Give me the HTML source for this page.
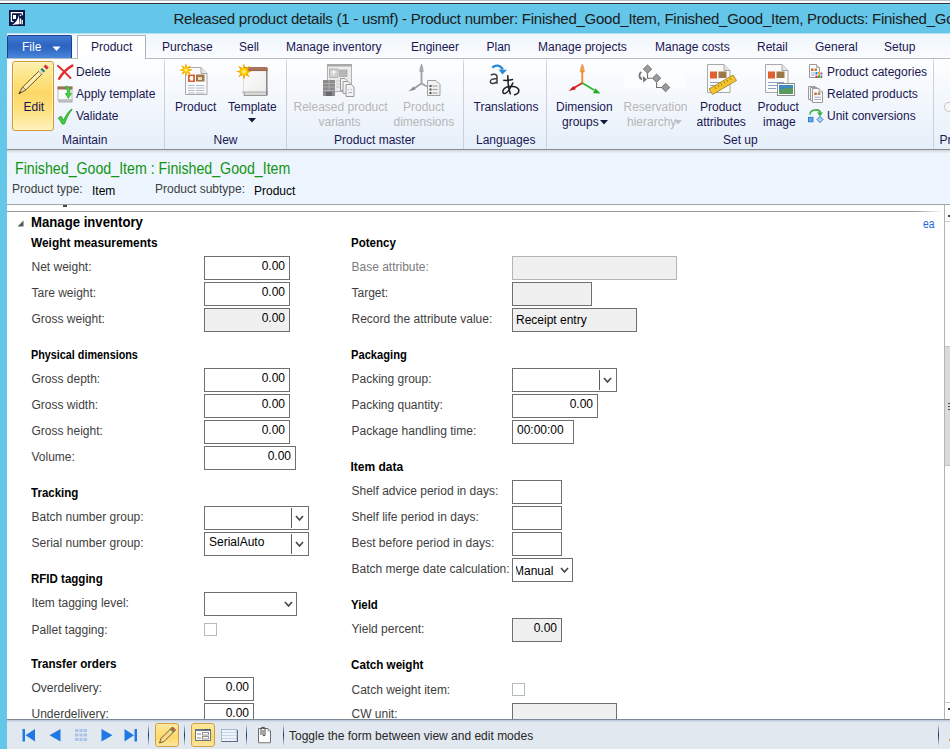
<!DOCTYPE html>
<html><head><meta charset="utf-8">
<style>
*{margin:0;padding:0;box-sizing:border-box}
html,body{width:950px;height:749px;overflow:hidden;background:#fff;font-family:"Liberation Sans",sans-serif;font-size:12px;line-height:1}
.a{position:absolute}
.t{position:absolute;white-space:nowrap;line-height:12px;font-size:12px}
.rb{color:#1a1652}
.dis{color:#b6b6b6}
.lab{color:#3e3e3e}
.labd{color:#7c7c7c}
.hd{font-weight:bold;color:#000}
.box{position:absolute;border:1px solid #6f6f6f;background:#fff;height:24px;overflow:hidden}
.boxd{background:#f0f0f0}
.boxl{border-color:#b2b6b9}
.num{position:absolute;right:4px;color:#000;line-height:12px;white-space:nowrap}
.val{position:absolute;left:4px;color:#000;line-height:12px;white-space:nowrap}
.clipv{overflow:hidden;width:45px;height:14px}
.chk{position:absolute;width:13px;height:13px;border:1px solid #b4babd;background:#fff}

</style></head><body>

<div class="a" style="left:0;top:0;width:950px;height:1px;background:#b9bfc7"></div>
<div class="a" style="left:0;top:1px;width:950px;height:2px;background:#fbfcfd"></div>
<div class="a" style="left:0;top:3px;width:950px;height:1px;background:#2b3038"></div>
<div class="a" style="left:0;top:4px;width:950px;height:1px;background:#66d2f4"></div>
<div class="a" style="left:0;top:5px;width:950px;height:744px;background:#64c6e8"></div>
<svg class="a" style="left:9px;top:10px" width="16" height="16" viewBox="0 0 16 16"><rect x="0" y="0" width="16" height="16" fill="#061446"/><path d="M2.4 11.8 V2.6 H13.4 V5.2" fill="none" stroke="#fff" stroke-width="1.3"/><path d="M2 11.6 H4.6" stroke="#fff" stroke-width="1"/><rect x="4" y="5" width="3" height="4" fill="#fff"/><path d="M3 15 C6.5 13 9 9.5 9.8 5 L10.5 14.3 C8 14.3 5.5 14.6 3 15 Z" fill="#fff"/><rect x="10.8" y="4.8" width="1.3" height="1.3" fill="#fff"/><rect x="10.8" y="8.3" width="1.3" height="5.8" fill="#fff"/><rect x="12.6" y="9.8" width="1.3" height="4.6" fill="#fff"/></svg>
<div class="t" style="left:173.5px;top:11px;font-size:15px;letter-spacing:-0.25px;line-height:16px;color:#1b1b1b">Released product details (1 - usmf) - Product number: Finished_Good_Item, Finished_Good_Item, Products: Finished_Good_Item</div>
<div class="a" style="left:7px;top:33px;width:943px;height:25px;background:linear-gradient(#f0f6fc,#fafcfe)"></div>
<div class="a" style="left:7px;top:33px;width:943px;height:1px;background:#b8e0f0"></div>
<div class="a" style="left:7px;top:58px;width:943px;height:1px;background:#b3bac2"></div>
<div class="a" style="left:7px;top:35px;width:65px;height:23px;border:1px solid #1c3f8e;border-bottom:none;border-radius:2px 2px 0 0;background:linear-gradient(#3f7cd4,#2c63bf 45%,#3671cb 70%,#4a88dc)"></div>
<div class="t" style="left:22px;top:41px;color:#fff">File</div>
<svg class="a" style="left:52px;top:45.5px" width="9" height="6"><path d="M0.5 0.5 L8.5 0.5 L4.5 5 Z" fill="#fff"/></svg>
<div class="a" style="left:77px;top:35px;width:69px;height:24px;border:1px solid #aab3bd;border-bottom:none;background:linear-gradient(#fff,#fdfeff)"></div>
<div class="t rb" style="left:91px;top:41px">Product</div>
<div class="t rb" style="left:162px;top:41px">Purchase</div>
<div class="t rb" style="left:239px;top:41px">Sell</div>
<div class="t rb" style="left:286px;top:41px">Manage inventory</div>
<div class="t rb" style="left:411px;top:41px">Engineer</div>
<div class="t rb" style="left:486.5px;top:41px">Plan</div>
<div class="t rb" style="left:538px;top:41px">Manage projects</div>
<div class="t rb" style="left:655px;top:41px">Manage costs</div>
<div class="t rb" style="left:757px;top:41px">Retail</div>
<div class="t rb" style="left:815px;top:41px">General</div>
<div class="t rb" style="left:884px;top:41px">Setup</div>
<div class="a" style="left:7px;top:59px;width:943px;height:90px;background:linear-gradient(#fdfeff 0%,#f1f6fc 55%,#e5effa 100%)"></div>
<div class="a" style="left:7px;top:149px;width:943px;height:1px;background:#868d95"></div>
<div class="a" style="left:164px;top:59px;width:1px;height:90px;background:linear-gradient(#dfe5ec,#c9d2dc 8%,#c9d2dc 100%)"></div>
<div class="a" style="left:286px;top:59px;width:1px;height:90px;background:linear-gradient(#dfe5ec,#c9d2dc 8%,#c9d2dc 100%)"></div>
<div class="a" style="left:463px;top:59px;width:1px;height:90px;background:linear-gradient(#dfe5ec,#c9d2dc 8%,#c9d2dc 100%)"></div>
<div class="a" style="left:546px;top:59px;width:1px;height:90px;background:linear-gradient(#dfe5ec,#c9d2dc 8%,#c9d2dc 100%)"></div>
<div class="a" style="left:933px;top:59px;width:1px;height:90px;background:linear-gradient(#dfe5ec,#c9d2dc 8%,#c9d2dc 100%)"></div>
<div class="a" style="left:12px;top:61px;width:42px;height:70px;border:1px solid #d4962e;border-radius:3px;box-shadow:inset 0 0 0 1px rgba(255,250,220,0.6);background:linear-gradient(#fcefb0 0%,#fde486 22%,#fdd868 45%,#fde07e 70%,#fff2bc 100%)"></div>
<svg class="a" style="left:12px;top:60px" width="42" height="40" viewBox="0 0 42 40">
<g transform="translate(6.9,33.7) rotate(-44.4)">
<path d="M0 0 L7.5 -2.1 L30 -2.1 L30 2.1 L7.5 2.1 Z" fill="#fbeeb0" stroke="#6a4a1a" stroke-width="0.9"/>
<path d="M0.3 0 L7.5 -2.1 L7.5 2.1 Z" fill="#f4dcb4" stroke="#6a4a1a" stroke-width="0.7"/>
<path d="M0 0 L2.2 -0.7 L2.2 0.7 Z" fill="#222"/>
<rect x="30" y="-2.2" width="2.8" height="4.4" fill="#d8d8e0"/>
<rect x="32.5" y="-2.2" width="2.3" height="4.4" fill="#2a8a3a"/>
<rect x="34.8" y="-2.2" width="1.8" height="4.4" fill="#f0f0f0"/>
<rect x="36.6" y="-2.2" width="3" height="4.4" fill="#d03040"/>
</g>
</svg>
<div class="t rb" style="left:23.5px;top:101px">Edit</div>
<svg class="a" style="left:56px;top:64px" width="18" height="17" viewBox="0 0 18 17">
<path d="M1.8 1.8 C5 4.5 10 9.5 14.5 14" stroke="#e2302a" stroke-width="1.9" stroke-linecap="round" fill="none"/>
<path d="M16.3 1.6 C11 4.5 6.5 9 3.2 14.6" stroke="#e2302a" stroke-width="2.5" stroke-linecap="round" fill="none"/>
</svg>
<div class="t rb" style="left:76px;top:66px">Delete</div>
<svg class="a" style="left:56px;top:85px" width="18" height="18" viewBox="0 0 18 18">
<rect x="3" y="14" width="13" height="3" fill="#d0d0d0" stroke="#9a9a9a" stroke-width="0.8"/>
<rect x="2" y="2" width="14" height="13" fill="#fbfbfb" stroke="#b0b0b0" stroke-width="0.8"/>
<rect x="1.5" y="1.5" width="15" height="3" fill="#a06e52"/>
<path d="M2 14.5 L16 14.5" stroke="#c8c8c8"/>
<path d="M10 1 C13.5 1.5 14.5 4.5 13.8 8.5 L15.5 8.5 L12.3 13.5 L9.3 8.5 L11.2 8.5 C11.6 6 11.2 4 10 3.5 Z" fill="#48d048" stroke="#20a020" stroke-width="0.6"/>
</svg>
<div class="t rb" style="left:76px;top:88px">Apply template</div>
<svg class="a" style="left:57px;top:108px" width="16" height="17" viewBox="0 0 16 17">
<path d="M1.3 9.8 L4.2 8.3 L6.6 12.2 C8.6 7.8 11 3.8 14.6 1 L15 1.8 C11.8 5.5 9.6 10.2 7.6 15.8 L5.4 16.2 Z" fill="#40d040" stroke="#1c901c" stroke-width="0.7"/>
</svg>
<div class="t rb" style="left:76px;top:110px">Validate</div>
<div class="t rb" style="left:62px;top:134px">Maintain</div>
<svg class="a" style="left:178px;top:62px" width="32" height="34" viewBox="0 0 32 34">
<path d="M7.5 5.5 L23 5.5 L29 11.5 L29 32.5 L7.5 32.5 Z" fill="#fafafa" stroke="#a8a8a8"/>
<path d="M23 5.5 L23 11.5 L29 11.5" fill="#e8e8e8" stroke="#a8a8a8"/>
<rect x="10" y="12.5" width="7" height="7.5" fill="#e06030"/>
<path d="M12 14 L15 14 L15 15.5 L16 16 L15 17 L15 18.5 L12 18.5 L12 17 L11 16 L12 15.5 Z" fill="#fff"/>
<rect x="18" y="12.5" width="8.5" height="7" fill="#9c7848"/>
<rect x="20" y="15" width="4" height="3" fill="#e8dcc0"/>
<g stroke="#a4b4cc" stroke-width="0.9"><path d="M10 23.5 H16.5 M18 23.5 H26.5 M10 26 H16.5 M18 26 H26.5 M10 28.5 H16.5 M18 28.5 H26.5 M10 31 H16.5 M18 31 H26.5"/></g>
<g transform="translate(8,8)"><path d="M0 -6.5 L1.82 0 L0 6.5 L-1.82 0 Z" fill="#f5a800" transform="rotate(0)"/><path d="M0 -6.5 L1.82 0 L0 6.5 L-1.82 0 Z" fill="#f5a800" transform="rotate(45)"/><path d="M0 -6.5 L1.82 0 L0 6.5 L-1.82 0 Z" fill="#f5a800" transform="rotate(90)"/><path d="M0 -6.5 L1.82 0 L0 6.5 L-1.82 0 Z" fill="#f5a800" transform="rotate(135)"/><path d="M0 -6.5 L1.82 0 L0 6.5 L-1.82 0 Z" fill="#f5a800" transform="rotate(180)"/><path d="M0 -6.5 L1.82 0 L0 6.5 L-1.82 0 Z" fill="#f5a800" transform="rotate(225)"/><path d="M0 -6.5 L1.82 0 L0 6.5 L-1.82 0 Z" fill="#f5a800" transform="rotate(270)"/><path d="M0 -6.5 L1.82 0 L0 6.5 L-1.82 0 Z" fill="#f5a800" transform="rotate(315)"/><circle r="2.93" fill="#ffd000"/><circle r="1.62" fill="#ffec70"/></g>
</svg>
<div class="t rb" style="left:175px;top:101px">Product</div>
<svg class="a" style="left:232px;top:60px" width="40" height="40" viewBox="0 0 40 40">
<defs><linearGradient id="tg" x1="0" y1="0" x2="1" y2="1"><stop offset="0" stop-color="#ffffff"/><stop offset="1" stop-color="#ececec"/></linearGradient></defs>
<path d="M12 31.5 H35 V35.5 H12 Z" fill="#d8d8d8" stroke="#8c8c8c" stroke-width="0.9"/>
<path d="M10 32 H34" stroke="#b8b8b8" stroke-width="1.2"/>
<rect x="11.5" y="7.5" width="23" height="24" fill="url(#tg)"/>
<path d="M11.5 8 V31.5" stroke="#dcdcdc" stroke-width="1"/>
<path d="M34.8 8 V35" stroke="#8a8a8a" stroke-width="1.6"/>
<path d="M11 7 H34.5 Q35.6 7 35.6 8.5 V11 H11 Z" fill="#a8735a"/>
<path d="M11 10.6 H35.6" stroke="#8a5a44" stroke-width="0.6"/>
<g transform="translate(12,11.6)"><path d="M0 -7.8 L2.18 0 L0 7.8 L-2.18 0 Z" fill="#f5a800" transform="rotate(0)"/><path d="M0 -7.8 L2.18 0 L0 7.8 L-2.18 0 Z" fill="#f5a800" transform="rotate(45)"/><path d="M0 -7.8 L2.18 0 L0 7.8 L-2.18 0 Z" fill="#f5a800" transform="rotate(90)"/><path d="M0 -7.8 L2.18 0 L0 7.8 L-2.18 0 Z" fill="#f5a800" transform="rotate(135)"/><path d="M0 -7.8 L2.18 0 L0 7.8 L-2.18 0 Z" fill="#f5a800" transform="rotate(180)"/><path d="M0 -7.8 L2.18 0 L0 7.8 L-2.18 0 Z" fill="#f5a800" transform="rotate(225)"/><path d="M0 -7.8 L2.18 0 L0 7.8 L-2.18 0 Z" fill="#f5a800" transform="rotate(270)"/><path d="M0 -7.8 L2.18 0 L0 7.8 L-2.18 0 Z" fill="#f5a800" transform="rotate(315)"/><circle r="3.51" fill="#ffd000"/><circle r="1.95" fill="#ffec70"/></g>
</svg>
<div class="t rb" style="left:228px;top:101px">Template</div>
<svg class="a" style="left:248px;top:118px" width="8" height="5"><path d="M0 0 L8 0 L4 4.5 Z" fill="#141a3c"/></svg>
<div class="t rb" style="left:213.5px;top:134px">New</div>
<svg class="a" style="left:318px;top:60px" width="40" height="40" viewBox="0 0 40 40">
<rect x="9.5" y="4.5" width="24" height="27" fill="#ececec" stroke="#b0b0b0"/>
<rect x="9" y="4" width="25" height="2.5" fill="#a8a8a8"/>
<rect x="11.5" y="9" width="8.5" height="8.5" fill="#d0d0d0" stroke="#9a9a9a" stroke-width="0.6"/>
<path d="M13.5 12 L18 12 M15.7 10 L15.7 15" stroke="#f4f4f4" stroke-width="1.6"/>
<rect x="21.5" y="10" width="7.5" height="6.5" fill="#b8b8b8" stroke="#9a9a9a" stroke-width="0.6"/>
<g stroke="#c4c4c4"><path d="M18 21 H22 M18 24 H22 M18 27 H22"/></g>
<rect x="5" y="20" width="12" height="16" fill="#8c8c8c"/>
<g stroke="#b4b4b4" stroke-width="0.8"><path d="M5 23.5 H17 M5 27 H17 M5 30.5 H17 M11 20 V31"/></g>
<rect x="8" y="32" width="6" height="4" fill="#6a6a6a"/>
<path d="M22.5 18.5 L27 18.5 L29 20.5 L29 30.5 L22.5 30.5 Z" fill="#f2f2f2" stroke="#9a9a9a"/>
<path d="M25 21.5 L30 21.5 L32 23.5 L32 33.5 L25 33.5 Z" fill="#f2f2f2" stroke="#9a9a9a"/>
<path d="M28 24.5 L33.5 24.5 L36 27 L36 36.5 L28 36.5 Z" fill="#f2f2f2" stroke="#9a9a9a"/>
<g stroke="#9a9a9a" stroke-width="0.8"><path d="M30 29.5 H31 M33 29.5 H34 M30.5 32.5 H34"/></g>
</svg>
<div class="t dis" style="left:293.5px;top:101px">Released product</div>
<div class="t dis" style="left:318.5px;top:116px">variants</div>
<svg class="a" style="left:404px;top:60px" width="40" height="40" viewBox="0 0 40 40">
<path d="M17.5 4 C16.5 7 15.8 9 15.8 11.5 L19.2 11.5 C19.2 9 18.5 7 17.5 4 Z" fill="#b0b0b0" stroke="#8c8c8c" stroke-width="0.6"/>
<path d="M17.5 11 L17.5 23.5" stroke="#a0a0a0" stroke-width="1.8"/>
<path d="M17.5 23.5 L10 28.5" stroke="#a0a0a0" stroke-width="1.8"/>
<path d="M4.5 31.5 L9.5 26.5 L11.5 29.5 Z" fill="#8c8c8c"/>
<path d="M17.5 23.5 L23 26.5" stroke="#a0a0a0" stroke-width="1.8"/>
<path d="M23.5 20.5 L32 20.5 L36 24.5 L36 35.5 L23.5 35.5 Z" fill="#f0f0f0" stroke="#a0a0a0"/>
<g fill="#4c4c4c"><rect x="25.5" y="25" width="2" height="2"/><rect x="25.5" y="28.5" width="2" height="2"/><rect x="25.5" y="32" width="2" height="2"/></g>
<g stroke="#9a9a9a"><path d="M28.5 26 H33.5 M28.5 29.5 H33.5 M28.5 33 H33.5"/></g>
</svg>
<div class="t dis" style="left:403px;top:101px">Product</div>
<div class="t dis" style="left:393.5px;top:116px">dimensions</div>
<div class="t rb" style="left:334px;top:134px">Product master</div>
<svg class="a" style="left:484px;top:60px" width="44" height="40" viewBox="0 0 44 40">
<path d="M8.3 7.6 C11.5 4.5 16.5 4.8 18.8 9.5" fill="none" stroke="#2a8ad8" stroke-width="2.3"/>
<path d="M14.5 9.6 L23 9.8 L18.4 14.6 Z" fill="#2a8ad8"/>
<path d="M6.8 15.2 C8.5 13.8 12.8 13.6 13 16.5 L13 23.8 M13 18.8 C8.5 18.6 6.3 19.6 6.3 21.5 C6.3 24 10.5 24.3 13 21.5" fill="none" stroke="#404040" stroke-width="1.5"/>
<g fill="none" stroke="#202020" stroke-width="1.55" stroke-linecap="round">
<path d="M19.8 20.3 C22.5 20.6 25.5 20.3 28.5 19.5"/>
<path d="M23.8 15.8 C23.8 22 24.3 28 26.3 33.8"/>
<path d="M28.8 23 C26.3 28.5 22.8 33.5 20.3 33.5 C18 33.5 18.3 28.8 22.3 27.3 C26.3 25.8 33 25.8 34.6 29.5 C35.6 32.3 33.3 34.3 30.6 34.8"/>
</g>
</svg>
<div class="t rb" style="left:473.5px;top:101px">Translations</div>
<div class="t rb" style="left:476px;top:134px">Languages</div>
<svg class="a" style="left:562px;top:60px" width="44" height="40" viewBox="0 0 44 40">
<path d="M20.3 4 C19 6.5 18.3 9 18.3 12 L22.3 12 C22.3 9 21.6 6.5 20.3 4 Z" fill="#f0a050" stroke="#e08020" stroke-width="0.5"/>
<path d="M20.3 11 L20.3 23" stroke="#f08a20" stroke-width="1.8"/>
<path d="M20.3 23 L11 28.5" stroke="#d82020" stroke-width="1.9"/>
<path d="M6.8 31 L11.5 26 L14 29.2 Z" fill="#d01818"/>
<path d="M20.3 23 L32 30" stroke="#30b830" stroke-width="1.9"/>
<path d="M38.5 33.6 L31 33.2 L33.3 28.3 Z" fill="#28a828"/>
</svg>
<div class="t rb" style="left:556px;top:101px">Dimension</div>
<div class="t rb" style="left:562px;top:116px">groups</div>
<svg class="a" style="left:600px;top:120px" width="8" height="5"><path d="M0 0 L8 0 L4 4.5 Z" fill="#141a3c"/></svg>
<div class="a" style="left:624px;top:70px;width:61px;height:18px;background:rgba(255,255,255,0.55)"></div>
<svg class="a" style="left:632px;top:60px" width="44" height="40" viewBox="0 0 44 40">
<path d="M15.5 13.3 V18.2 H20.5 M24.6 22.4 V27.5 H29.5" fill="none" stroke="#707070" stroke-width="1.1"/>
<g fill="#9a9a9a" stroke="#6c6c6c" stroke-width="0.9">
<path d="M15.5 5 L19.7 9.1 L15.5 13.3 L11.3 9.1 Z"/><path d="M24.6 14 L28.8 18.2 L24.6 22.4 L20.4 18.2 Z"/><path d="M33.6 23.3 L37.8 27.5 L33.6 31.7 L29.4 27.5 Z"/></g>
<path d="M9.3 12 C6.5 13.8 6.8 18 10 19.3" fill="none" stroke="#747474" stroke-width="1.9"/>
<path d="M10.8 16 L15 19.5 L11.2 22.5 Z" fill="#747474"/>
</svg>
<div class="t dis" style="left:623.5px;top:101px">Reservation</div>
<div class="t dis" style="left:627px;top:116px">hierarchy</div>
<svg class="a" style="left:674px;top:120px" width="8" height="5"><path d="M0 0 L8 0 L4 4.5 Z" fill="#c0c0c0"/></svg>
<svg class="a" style="left:704px;top:62px" width="34" height="34" viewBox="0 0 34 34">
<path d="M3.5 2.5 L20 2.5 L26 8.5 L26 30.5 L3.5 30.5 Z" fill="#fafafa" stroke="#a8a8a8"/>
<path d="M20 2.5 L20 8.5 L26 8.5" fill="#e4e4e4" stroke="#a8a8a8"/>
<rect x="6" y="9.5" width="7" height="7" fill="#e06030"/><rect x="14.5" y="9.5" width="8" height="6.5" fill="#9c7848"/>
<g stroke="#8ea0c0"><path d="M6 20.5 H22 M6 23.5 H22 M6 26.5 H18"/></g>
<path d="M5 27 L29 13 L32.5 18.5 L8.5 32.5 Z" fill="#f4c430" stroke="#9c7a18" stroke-width="0.8"/>
<g stroke="#8a6a10" stroke-width="0.8"><path d="M11 25 L12 27 M14 23 L15 25 M17 21.5 L18 23.5 M20 19.5 L21 21.5 M23 18 L24 20 M26 16 L27 18"/></g>
</svg>
<div class="t rb" style="left:700px;top:101px">Product</div>
<div class="t rb" style="left:696.5px;top:116px">attributes</div>
<svg class="a" style="left:762px;top:62px" width="34" height="36" viewBox="0 0 34 36">
<path d="M3.5 2.5 L20 2.5 L26 8.5 L26 30.5 L3.5 30.5 Z" fill="#fafafa" stroke="#a8a8a8"/>
<path d="M20 2.5 L20 8.5 L26 8.5" fill="#e4e4e4" stroke="#a8a8a8"/>
<rect x="6" y="9.5" width="7" height="7" fill="#e06030"/><rect x="14.5" y="9.5" width="8" height="6.5" fill="#9c7848"/>
<g stroke="#8ea0c0"><path d="M6 20.5 H22 M6 23.5 H22 M6 26.5 H14"/></g>
<rect x="15.5" y="21.5" width="17" height="12" fill="#fff" stroke="#8c8c8c"/>
<rect x="17" y="23" width="14" height="9" fill="#3c8ac0"/>
<path d="M17 29 C21 25 25 27 31 26 L31 32 L17 32 Z" fill="#5a9a5a"/>
</svg>
<div class="t rb" style="left:757.5px;top:101px">Product</div>
<div class="t rb" style="left:763px;top:116px">image</div>
<svg class="a" style="left:804px;top:60px" width="20" height="20" viewBox="0 0 20 20">
<path d="M5.5 4.5 L12.5 4.5 L15.5 7.5 L15.5 17.5 L5.5 17.5 Z" fill="#fafafa" stroke="#9a9a9a"/>
<path d="M12.5 4.5 V7.5 H15.5" fill="#e6e6e6" stroke="#9a9a9a" stroke-width="0.8"/>
<rect x="7" y="8.5" width="2.5" height="2.5" fill="#e06030"/><rect x="10.5" y="8.5" width="2.5" height="2.5" fill="#a88858"/>
<g stroke="#8ea0c0" stroke-width="0.8"><path d="M7 13 H11 M7 15 H11"/></g>
<rect x="11.5" y="12" width="2" height="2.5" fill="#2a7ae0"/><rect x="14" y="12" width="2" height="2.5" fill="#f0b020"/><rect x="16.5" y="12.5" width="1.8" height="2" fill="#a040b0"/>
<rect x="11.5" y="15.5" width="2" height="2.5" fill="#e03030"/><rect x="14" y="15.5" width="2" height="2.5" fill="#30b030"/><rect x="16.5" y="15.5" width="1.8" height="2.5" fill="#707070"/>
</svg>
<div class="t rb" style="left:827px;top:66px">Product categories</div>
<svg class="a" style="left:804px;top:85px" width="20" height="19" viewBox="0 0 20 19">
<path d="M4.5 1.5 L11 1.5 L13 3.5 L13 14.5 L4.5 14.5 Z" fill="#f6f6f6" stroke="#9a9a9a"/>
<path d="M6.5 2.5 L13 2.5 L15 4.5 L15 15.5 L6.5 15.5 Z" fill="#f8f8f8" stroke="#9a9a9a"/>
<path d="M8.5 3.5 L15 3.5 L18.5 7 L18.5 17.5 L8.5 17.5 Z" fill="#fcfcfc" stroke="#9a9a9a"/>
<path d="M15 3.5 V7 H18.5" fill="#e6e6e6" stroke="#9a9a9a" stroke-width="0.8"/>
<rect x="10.3" y="7.5" width="2.5" height="2.5" fill="#e06030"/><rect x="13.8" y="7.5" width="2.5" height="2.5" fill="#a88858"/>
<g stroke="#8ea0c0" stroke-width="0.8"><path d="M10.3 12.2 H17 M10.3 14.5 H17"/></g>
</svg>
<div class="t rb" style="left:827px;top:88px">Related products</div>
<svg class="a" style="left:804px;top:107px" width="20" height="17" viewBox="0 0 20 17">
<path d="M6 7.5 C6 2 15 1.5 16.5 5.5" fill="none" stroke="#38b040" stroke-width="1.6"/>
<path d="M13.2 5.2 L19 5.5 L15.8 9.5 Z" fill="#38b040"/>
<rect x="4.5" y="10.3" width="4.5" height="4.5" fill="#5aa8f0" stroke="#2a6cc0" stroke-width="0.8"/>
<path d="M16 9.4 L19 12.5 L16 15.6 L13 12.5 Z" fill="#a8d4f8" stroke="#2a6cc0" stroke-width="0.9"/>
</svg>
<div class="t rb" style="left:827px;top:110px">Unit conversions</div>
<div class="t rb" style="left:723px;top:134px">Set up</div>
<div class="t rb" style="left:939.5px;top:134px">Pr</div>
<div class="a" style="left:943.5px;top:102px;width:7px;height:10px;border:1.5px solid #cdc6bc;border-right:none;border-radius:6px 0 0 6px"></div>
<div class="a" style="left:7px;top:150px;width:943px;height:54px;background:linear-gradient(#d6dade 0,#d6dade 1px,#dfe3e7 1px,#dfe3e7 2px,#e6ebef 2px,#e6ebef 3px,#ecf5fd 3px,#edf6fe 100%)"></div>
<div class="a" style="left:7px;top:204px;width:943px;height:1px;background:#a2a6aa"></div>
<div class="t" style="left:15px;top:161px;font-size:16px;line-height:16px;color:#139313;transform:scaleX(0.887);transform-origin:0 0">Finished_Good_Item : Finished_Good_Item</div>
<div class="t lab" style="left:12px;top:183.3px">Product type:</div>
<div class="t" style="left:92px;top:184.5px;color:#000">Item</div>
<div class="t lab" style="left:155px;top:183.3px">Product subtype:</div>
<div class="t" style="left:254px;top:184.5px;color:#000">Product</div>
<div class="a" style="left:7px;top:205px;width:937px;height:514px;background:#fff"></div>
<div class="a" style="left:7px;top:211px;width:936px;height:1px;background:linear-gradient(90deg,#9a9a9a,#9a9a9a 97%,rgba(154,154,154,0))"></div>
<div class="a" style="left:63px;top:205px;width:4px;height:1.5px;background:#444"></div>
<svg class="a" style="left:16.5px;top:220.3px" width="7" height="7"><path d="M6.5 0.5 L6.5 6.5 L0.5 6.5 Z" fill="#595959"/></svg>
<div class="t" style="left:31px;top:215px;font-size:14px;line-height:14px;font-weight:bold;color:#000;transform:scaleX(0.94);transform-origin:0 0">Manage inventory</div>
<div class="t" style="left:922.5px;top:218px;color:#1a66dc;transform:scaleX(0.86);transform-origin:0 0">ea</div>
<div class="t hd" style="left:30.5px;top:237px;transform:scaleX(0.99);transform-origin:0 0">Weight measurements</div>
<div class="t lab" style="left:31.5px;top:260.5px">Net weight:</div>
<div class="box" style="left:204px;top:256px;width:86px"><div class="num" style="top:2.7px">0.00</div></div>
<div class="t lab" style="left:31.5px;top:286.5px">Tare weight:</div>
<div class="box" style="left:204px;top:282px;width:86px"><div class="num" style="top:2.7px">0.00</div></div>
<div class="t lab" style="left:31.5px;top:312.5px">Gross weight:</div>
<div class="box boxd" style="left:204px;top:308px;width:86px"><div class="num" style="top:2.7px">0.00</div></div>
<div class="t hd" style="left:30.5px;top:349px;transform:scaleX(0.9);transform-origin:0 0">Physical dimensions</div>
<div class="t lab" style="left:31.5px;top:372.5px">Gross depth:</div>
<div class="box" style="left:204px;top:368px;width:86px"><div class="num" style="top:2.7px">0.00</div></div>
<div class="t lab" style="left:31.5px;top:398.5px">Gross width:</div>
<div class="box" style="left:204px;top:394px;width:86px"><div class="num" style="top:2.7px">0.00</div></div>
<div class="t lab" style="left:31.5px;top:424.5px">Gross height:</div>
<div class="box" style="left:204px;top:420px;width:86px"><div class="num" style="top:2.7px">0.00</div></div>
<div class="t lab" style="left:31.5px;top:450.5px">Volume:</div>
<div class="box" style="left:204px;top:446px;width:92px"><div class="num" style="top:2.7px">0.00</div></div>
<div class="t hd" style="left:30.5px;top:487px;transform:scaleX(0.96);transform-origin:0 0">Tracking</div>
<div class="t lab" style="left:31.5px;top:510.5px">Batch number group:</div>
<div class="box" style="left:204px;top:506px;width:105px"><div class="a" style="left:86px;top:1px;width:1px;height:20px;background:#5c5c5c"></div><svg class="a" style="left:90px;top:8px" width="9" height="7"><path d="M1 1 L4.5 5 L8 1" fill="none" stroke="#4a4a4a" stroke-width="1.7"/></svg></div>
<div class="t lab" style="left:31.5px;top:536.5px">Serial number group:</div>
<div class="box" style="left:204px;top:532px;width:105px"><div class="val" style="top:2.7px;left:4px">SerialAuto</div><div class="a" style="left:86px;top:1px;width:1px;height:20px;background:#5c5c5c"></div><svg class="a" style="left:90px;top:8px" width="9" height="7"><path d="M1 1 L4.5 5 L8 1" fill="none" stroke="#4a4a4a" stroke-width="1.7"/></svg></div>
<div class="t hd" style="left:30.5px;top:573px;transform:scaleX(0.96);transform-origin:0 0">RFID tagging</div>
<div class="t lab" style="left:31.5px;top:596.5px">Item tagging level:</div>
<div class="box" style="left:204px;top:592px;width:93px"><svg class="a" style="left:79px;top:8px" width="9" height="7"><path d="M1 1 L4.5 5 L8 1" fill="none" stroke="#4a4a4a" stroke-width="1.7"/></svg></div>
<div class="t lab" style="left:31.5px;top:623.5px">Pallet tagging:</div>
<div class="chk" style="left:204px;top:623px"></div>
<div class="t hd" style="left:30.5px;top:658px;transform:scaleX(0.97);transform-origin:0 0">Transfer orders</div>
<div class="t lab" style="left:31.5px;top:681.5px">Overdelivery:</div>
<div class="box" style="left:204px;top:677px;width:50px"><div class="num" style="top:2.7px">0.00</div></div>
<div class="t lab" style="left:31.5px;top:707.5px">Underdelivery:</div>
<div class="box" style="left:204px;top:703px;width:50px"><div class="num" style="top:2.7px">0.00</div></div>
<div class="t hd" style="left:350.5px;top:237px;transform:scaleX(0.96);transform-origin:0 0">Potency</div>
<div class="t lab labd" style="left:351.5px;top:260.5px">Base attribute:</div>
<div class="box boxd boxl" style="left:512px;top:256px;width:165px"></div>
<div class="t lab" style="left:351.5px;top:286.5px">Target:</div>
<div class="box boxd" style="left:512px;top:282px;width:80px"></div>
<div class="t lab" style="left:351.5px;top:312.5px">Record the attribute value:</div>
<div class="box boxd" style="left:512px;top:308px;width:125px"><div class="val" style="top:4.6px;left:3px">Receipt entry</div></div>
<div class="t hd" style="left:350.5px;top:349px;transform:scaleX(0.93);transform-origin:0 0">Packaging</div>
<div class="t lab" style="left:351.5px;top:372.5px">Packing group:</div>
<div class="box" style="left:512px;top:368px;width:105px"><div class="a" style="left:86px;top:1px;width:1px;height:20px;background:#5c5c5c"></div><svg class="a" style="left:90px;top:8px" width="9" height="7"><path d="M1 1 L4.5 5 L8 1" fill="none" stroke="#4a4a4a" stroke-width="1.7"/></svg></div>
<div class="t lab" style="left:351.5px;top:398.5px">Packing quantity:</div>
<div class="box" style="left:512px;top:394px;width:86px"><div class="num" style="top:2.7px">0.00</div></div>
<div class="t lab" style="left:351.5px;top:424.5px">Package handling time:</div>
<div class="box" style="left:512px;top:420px;width:62px"><div class="val" style="top:2.7px;left:4px">00:00:00</div></div>
<div class="t hd" style="left:350.5px;top:461px;transform:scaleX(1.0);transform-origin:0 0">Item data</div>
<div class="t lab" style="left:351.5px;top:484.5px">Shelf advice period in days:</div>
<div class="box" style="left:512px;top:480px;width:50px"></div>
<div class="t lab" style="left:351.5px;top:510.5px">Shelf life period in days:</div>
<div class="box" style="left:512px;top:506px;width:50px"></div>
<div class="t lab" style="left:351.5px;top:536.5px">Best before period in days:</div>
<div class="box" style="left:512px;top:532px;width:50px"></div>
<div class="t lab" style="left:351.5px;top:562.5px">Batch merge date calculation:</div>
<div class="box" style="left:512px;top:558px;width:61px"><div class="val clipv" style="top:6px;left:2.5px"><span style="position:absolute;left:-1.5px;top:0">Manual</span></div><svg class="a" style="left:47px;top:8px" width="9" height="7"><path d="M1 1 L4.5 5 L8 1" fill="none" stroke="#4a4a4a" stroke-width="1.7"/></svg></div>
<div class="t hd" style="left:350.5px;top:599px;transform:scaleX(0.95);transform-origin:0 0">Yield</div>
<div class="t lab" style="left:351.5px;top:622.5px">Yield percent:</div>
<div class="box boxd" style="left:512px;top:618px;width:50px"><div class="num" style="top:2.7px">0.00</div></div>
<div class="t hd" style="left:350.5px;top:659px;transform:scaleX(0.97);transform-origin:0 0">Catch weight</div>
<div class="t lab" style="left:351.5px;top:684.0px">Catch weight item:</div>
<div class="chk" style="left:512px;top:683px"></div>
<div class="t lab" style="left:351.5px;top:707.5px">CW unit:</div>
<div class="box boxd" style="left:512px;top:703px;width:105px"></div>
<div class="a" style="left:944px;top:205px;width:6px;height:514px;background:#fff;border-left:1px solid #b4b4b4"></div>
<div class="a" style="left:945px;top:221px;width:5px;height:1px;background:#c8c8c8"></div>
<div class="a" style="left:948px;top:215px;width:2px;height:2px;background:#444"></div>
<div class="a" style="left:945px;top:346px;width:5px;height:120px;background:#dadada;border-top:1px solid #c2c2c2;border-bottom:1px solid #c2c2c2"></div>
<div class="a" style="left:947.5px;top:402.5px;width:2.5px;height:8px;background:repeating-linear-gradient(#505050 0,#505050 1.5px,#dadada 1.5px,#dadada 3px)"></div>
<div class="a" style="left:945px;top:702px;width:5px;height:1px;background:#c8c8c8"></div>
<div class="a" style="left:948px;top:708px;width:2px;height:2px;background:#444"></div>
<div class="a" style="left:7px;top:719px;width:943px;height:30px;background:linear-gradient(#e2e8f0,#e2e8f0)"></div>
<div class="a" style="left:7px;top:720px;width:943px;height:3px;background:linear-gradient(#b4c4d8,#d8e1eb 60%,#e2e8f0)"></div>
<div class="a" style="left:7px;top:719px;width:943px;height:1px;background:#7e8894"></div>
<svg class="a" style="left:22px;top:729px" width="14" height="13"><rect x="0.5" y="0" width="2.5" height="12.5" fill="#1f78e4"/><path d="M13 0 L13 12.5 L3.5 6.25 Z" fill="#1f78e4"/></svg>
<svg class="a" style="left:49px;top:729px" width="12" height="13"><path d="M11.5 0 L11.5 12.5 L0.5 6.25 Z" fill="#1f78e4"/></svg>
<svg class="a" style="left:75px;top:729px" width="12" height="13"><g fill="#a8c4e8"><rect x="0" y="0" width="12" height="3"/><rect x="0" y="4.5" width="12" height="3"/><rect x="0" y="9" width="12" height="3"/></g><g fill="#e2e8f0"><rect x="3.5" y="0" width="1" height="12"/><rect x="7.5" y="0" width="1" height="12"/></g></svg>
<svg class="a" style="left:101px;top:729px" width="12" height="13"><path d="M0.5 0 L0.5 12.5 L11.5 6.25 Z" fill="#1f78e4"/></svg>
<svg class="a" style="left:124px;top:729px" width="14" height="13"><path d="M0.5 0 L0.5 12.5 L10 6.25 Z" fill="#1f78e4"/><rect x="10.5" y="0" width="2.5" height="12.5" fill="#1f78e4"/></svg>
<div class="a" style="left:148px;top:724px;width:1px;height:22px;background:linear-gradient(rgba(20,60,110,0),#0e3466 50%,rgba(20,60,110,0))"></div>
<div class="a" style="left:184px;top:724px;width:1px;height:22px;background:linear-gradient(rgba(20,60,110,0),#0e3466 50%,rgba(20,60,110,0))"></div>
<div class="a" style="left:246px;top:724px;width:1px;height:22px;background:linear-gradient(rgba(20,60,110,0),#0e3466 50%,rgba(20,60,110,0))"></div>
<div class="a" style="left:283px;top:724px;width:1px;height:22px;background:linear-gradient(rgba(20,60,110,0),#0e3466 50%,rgba(20,60,110,0))"></div>
<div class="a" style="left:938px;top:724px;width:1px;height:22px;background:linear-gradient(rgba(20,60,110,0),#0e3466 50%,rgba(20,60,110,0))"></div>
<div class="a" style="left:155px;top:723px;width:24px;height:24px;border:1px solid #d0a048;border-radius:3px;background:linear-gradient(#fde9a0,#fcd868 60%,#fde7a0)"></div>
<svg class="a" style="left:157px;top:725px" width="20" height="20" viewBox="0 0 20 20">
<path d="M2.5 18 L4 13.5 L15.5 2 L18.5 5 L7 16.5 Z" fill="#f6dc8c" stroke="#6a4a20" stroke-width="0.9"/>
<path d="M15.5 2 L18.5 5 L17 6.5 L14 3.5 Z" fill="#d84a4a"/>
<path d="M14 3.5 L17 6.5 L16 7.5 L13 4.5 Z" fill="#3c9a4c"/>
</svg>
<div class="a" style="left:191px;top:723px;width:24px;height:24px;border:1px solid #d0a048;border-radius:3px;background:linear-gradient(#fde9a0,#fcd868 60%,#fde7a0)"></div>
<svg class="a" style="left:195px;top:729px" width="16" height="12" viewBox="0 0 16 12">
<rect x="0.5" y="0.5" width="15" height="11" fill="#fcfcfc" stroke="#6a7484"/>
<rect x="0.5" y="0.5" width="15" height="1.5" fill="#6a7484"/>
<g fill="#3a4454"><rect x="10" y="0" width="1" height="1"/><rect x="12" y="0" width="1" height="1"/><rect x="14" y="0" width="1" height="1"/></g>
<rect x="7.5" y="3.5" width="6" height="2.5" fill="#fff" stroke="#7a7a7a" stroke-width="0.8"/>
<rect x="7.5" y="7.5" width="6" height="2.5" fill="#fff" stroke="#7a7a7a" stroke-width="0.8"/>
<path d="M2 5 H6 M2 9 H6" stroke="#7a7a7a" stroke-width="0.9"/>
</svg>
<svg class="a" style="left:221px;top:729px" width="17" height="13" viewBox="0 0 17 13">
<rect x="0.5" y="0.5" width="15.5" height="12" fill="#f4f8fc" stroke="#a8b8cc"/>
<g fill="#c4d2e4"><rect x="1" y="3" width="15" height="1"/><rect x="1" y="6" width="15" height="1"/><rect x="1" y="9" width="15" height="1"/></g>
<g fill="#dce6f2"><rect x="4.5" y="1" width="1" height="11"/><rect x="8.5" y="1" width="1" height="11"/><rect x="12.5" y="1" width="1" height="11"/></g>
<path d="M0.5 12.5 H16.5 V1" fill="none" stroke="#5a6c88" stroke-width="1.2"/>
</svg>
<svg class="a" style="left:257px;top:725px" width="16" height="19" viewBox="0 0 16 19">
<path d="M1.5 3.5 L11 3.5 L13.5 6 L13.5 17.5 L1.5 17.5 Z" fill="#fdfdfd" stroke="#6a6a6a"/>
<path d="M11 3.5 L11 6 L13.5 6" fill="#e0e0e0" stroke="#8a8a8a" stroke-width="0.8"/>
<path d="M1.5 17.8 L13.5 17.8" stroke="#a0a0a0" stroke-width="1.2"/>
<path d="M4 10 L4 4 C4 1.8 8 1.8 8 4 L8 9.5 C8 11 6 11 6 9.5 L6 5" fill="none" stroke="#5a5a5a" stroke-width="1.1"/>
</svg>
<div class="t" style="left:289px;top:730px;color:#262626">Toggle the form between view and edit modes</div>
<div class="a" style="left:949px;top:739px;width:1px;height:2px;background:#f0a020"></div>
</body></html>
